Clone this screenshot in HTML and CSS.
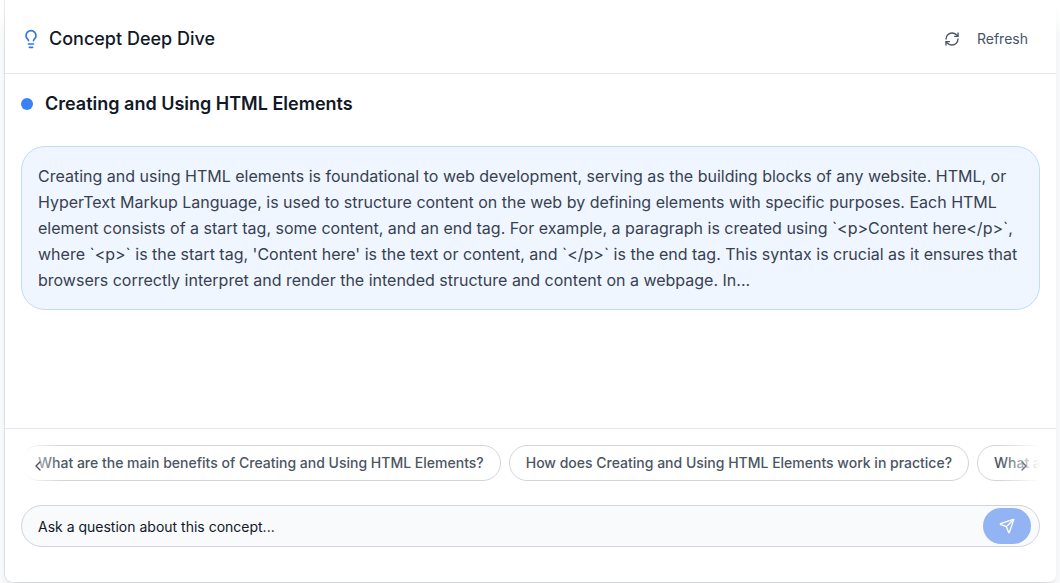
FILE: index.html
```html
<!DOCTYPE html>
<html lang="en">
<head>
    <meta charset="UTF-8">
    <meta name="viewport" content="width=device-width, initial-scale=1.0">
    <title>Concept Deep Dive</title>
    <link rel="stylesheet" href="styles.css">
</head>
<body>
    <div class="panel">
        <header class="panel-header">
            <div class="panel-title">
                <svg class="bulb-icon" width="20" height="20" viewBox="0 0 24 24" fill="none" stroke="currentColor" stroke-width="2" stroke-linecap="round" stroke-linejoin="round">
                    <path d="M15 14c.2-1 .7-1.7 1.5-2.500 1-.9 1.500-2.200 1.500-3.500A6 6 0 0 0 6 8c0 1 .2 2.200 1.500 3.500.7.700 1.300 1.500 1.500 2.500"/>
                    <path d="M9 18h6"/>
                    <path d="M10 22h4"/>
                </svg>
                <h2>Concept Deep Dive</h2>
            </div>
            <button class="refresh-btn">
                <svg width="16" height="16" viewBox="0 0 24 24" fill="none" stroke="currentColor" stroke-width="2" stroke-linecap="round" stroke-linejoin="round">
                    <path d="M3 12a9 9 0 0 1 9-9 9.750 9.750 0 0 1 6.740 2.740L21 8"/>
                    <path d="M21 3v5h-5"/>
                    <path d="M21 12a9 9 0 0 1-9 9 9.750 9.750 0 0 1-6.740-2.740L3 16"/>
                    <path d="M8 16H3v5"/>
                </svg>
                <span class="refresh-label">Refresh</span>
            </button>
        </header>

        <main class="panel-body">
            <div class="topic">
                <span class="topic-dot"></span>
                <h3>Creating and Using HTML Elements</h3>
            </div>
            <div class="answer">
                Creating and using HTML elements is foundational to web development, serving as the building blocks of any website. HTML, or HyperText Markup Language, is used to structure content on the web by defining elements with specific purposes. Each HTML element consists of a start tag, some content, and an end tag. For example, a paragraph is created using `&lt;p&gt;Content here&lt;/p&gt;`, where `&lt;p&gt;` is the start tag, 'Content here' is the text or content, and `&lt;/p&gt;` is the end tag. This syntax is crucial as it ensures that browsers correctly interpret and render the intended structure and content on a webpage. In...
            </div>
        </main>

        <footer class="panel-footer">
            <div class="suggestions">
                <div class="chips">
                    <button class="chip">What are the main benefits of Creating and Using HTML Elements?</button>
                    <button class="chip">How does Creating and Using HTML Elements work in practice?</button>
                    <button class="chip chip-cut">What a</button>
                </div>
                <div class="fade fade-left"></div>
                <div class="fade fade-right"></div>
                <svg class="arrow arrow-left" width="16" height="16" viewBox="0 0 24 24" fill="none" stroke="currentColor" stroke-width="2" stroke-linecap="round" stroke-linejoin="round"><path d="m15 18-6-6 6-6"/></svg>
                <svg class="arrow arrow-right" width="16" height="16" viewBox="0 0 24 24" fill="none" stroke="currentColor" stroke-width="2" stroke-linecap="round" stroke-linejoin="round"><path d="m9 18 6-6-6-6"/></svg>
            </div>
            <div class="ask">
                <span class="ask-text">Ask a question about this concept...</span>
                <button class="send-btn">
                    <svg width="16" height="16" viewBox="0 0 24 24" fill="none" stroke="currentColor" stroke-width="2" stroke-linecap="round" stroke-linejoin="round">
                        <path d="M14.536 21.686a.5.5 0 0 0 .937-.024l6.500-19a.496.496 0 0 0-.635-.635l-19 6.500a.5.5 0 0 0-.024.937l7.930 3.180a2 2 0 0 1 1.112 1.110z"/>
                        <path d="m21.854 2.147-10.940 10.939"/>
                    </svg>
                </button>
            </div>
        </footer>
    </div>
</body>
</html>
```

FILE: styles.css
```css
/* General Styles */
html, body {
    height: 100%;
}

body {
    margin: 0;
    background-color: #fff;
    font-family: Inter, sans-serif;
    color: #111827;
    overflow: hidden;
}

/* Main panel */
.panel {
    box-sizing: border-box;
    width: 1051px;
    height: 582px;
    margin-left: 5px;
    background-color: #fff;
    border-radius: 0 0 8px 8px;
    box-shadow: 0 20px 25px -5px rgba(40, 70, 100, 0.14), 0 8px 10px -6px rgba(0, 0, 0, 0.14), -1px 0 0 rgba(120, 130, 140, 0.16);
    display: flex;
    flex-direction: column;
}

/* Header */
.panel-header {
    height: 74px;
    box-sizing: border-box;
    border-bottom: 1px solid #e5e7eb;
    padding: 5px 16px 0;
    display: flex;
    align-items: center;
    justify-content: space-between;
}

.panel-title {
    display: flex;
    align-items: center;
    gap: 8px;
}

.bulb-icon {
    color: #2f74f0;
}

.panel-title h2 {
    margin: 0;
    font-size: 18px;
    font-weight: 500;
    line-height: 28px;
}

.refresh-btn {
    border: none;
    background: none;
    padding: 0 12px;
    display: flex;
    align-items: center;
    gap: 17px;
    font-family: inherit;
    font-size: 14px;
    font-weight: 400;
    color: #475569;
}

.refresh-label {
    padding-bottom: 2px;
}

/* Body */
.panel-body {
    flex: 1;
    padding: 0 16px;
}

.topic {
    height: 59px;
    display: flex;
    align-items: center;
    gap: 12px;
}

.topic-dot {
    width: 12px;
    height: 12px;
    border-radius: 50%;
    background-color: #3b82f6;
}

.topic h3 {
    margin: 0;
    font-size: 18px;
    font-weight: 600;
}

.answer {
    margin-top: 13px;
    padding: 16px;
    background-color: #eff6ff;
    border: 1px solid #bfdbfe;
    border-radius: 24px;
    font-size: 16px;
    line-height: 26px;
    color: #374151;
}

/* Footer */
.panel-footer {
    height: 154px;
    box-sizing: border-box;
    border-top: 1px solid #e5e7eb;
    padding: 16px 16px 0;
}

.suggestions {
    position: relative;
    overflow: hidden;
}

.chips {
    display: flex;
    gap: 8px;
    overflow: hidden;
}

.chip {
    flex-shrink: 0;
    height: 36px;
    padding: 0 16px 2px;
    background-color: #fff;
    border: 1px solid #d1d5db;
    border-radius: 18px;
    font-family: inherit;
    font-size: 14px;
    font-weight: 500;
    color: #4b5563;
    white-space: nowrap;
}

.chip-cut {
    width: 140px;
    text-align: left;
}

.fade {
    position: absolute;
    top: 0;
    bottom: 0;
    width: 40px;
}

.fade-left {
    left: 0;
    background: linear-gradient(to right, #fff, rgba(255, 255, 255, 0));
}

.fade-right {
    right: 0;
    background: linear-gradient(to left, #fff, rgba(255, 255, 255, 0));
}

.arrow {
    position: absolute;
    top: 13px;
}

.arrow-left {
    left: 9px;
    color: #4b5563;
}

.arrow-right {
    right: 8px;
    color: #6b7280;
}

.ask {
    box-sizing: border-box;
    margin-top: 24px;
    height: 42px;
    padding-left: 16px;
    padding-right: 8px;
    background-color: #f8fafc;
    border: 1px solid #d1d5db;
    border-radius: 21px;
    display: flex;
    align-items: center;
    justify-content: space-between;
}

.ask-text {
    font-size: 14px;
    color: #111827;
}

.send-btn {
    width: 48px;
    height: 36px;
    border: none;
    border-radius: 18px;
    background-color: #93b4f3;
    color: #fff;
    display: flex;
    align-items: center;
    justify-content: center;
    padding: 0;
}
```
